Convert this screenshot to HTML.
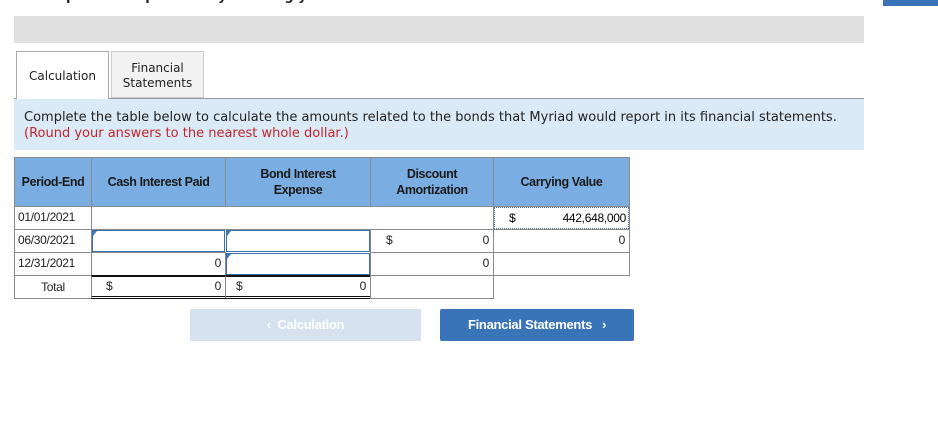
<!DOCTYPE html>
<html><head><style>
body{margin:0;width:938px;height:438px;background:#fff;position:relative;overflow:hidden;font-family:"Liberation Sans",sans-serif;}
.a{position:absolute;box-sizing:border-box;}
.vf{font-family:"DejaVu Sans","Liberation Sans",sans-serif;}
.c{position:absolute;box-sizing:border-box;border:1px solid #8a8a8a;font-size:12px;color:#222;letter-spacing:-0.3px;}
.h{background:#7aaee3;font-weight:bold;text-align:center;display:flex;align-items:center;justify-content:center;line-height:16px;color:#1a1a1a;font-size:12.5px;letter-spacing:-0.4px;}
.r{text-align:right;padding-right:4px;line-height:21px;}
.l{padding-left:3px;line-height:21px;}
.in{border:1px solid #3a6ea5;}
.in:before{content:"";position:absolute;left:0;top:0;border-top:5px solid #3a78c4;border-right:4px solid transparent;}
</style></head><body>
<div class="a" style="left:883px;top:0;width:55px;height:6px;background:#3a74b8;"></div>
<div class="a" style="left:14px;top:16px;width:850px;height:27px;background:#e0e0e0;"></div>
<div class="a vf" style="left:34px;top:0;height:16px;overflow:hidden;font-size:13px;font-weight:bold;color:#222;"><div style="margin-top:-13px;line-height:20px;">Complete this question by entering your answers in the tabs below.</div></div>
<div class="a" style="left:14px;top:98px;width:850px;height:1px;background:#999;"></div>
<div class="a vf" style="left:16px;top:51px;width:93px;height:48px;border:1px solid #aaa;border-bottom:none;background:#fff;font-size:12px;text-align:center;line-height:48px;color:#222;">Calculation</div>
<div class="a vf" style="left:111px;top:51px;width:93px;height:47px;border:1px solid #ccc;background:#f2f2f2;font-size:12px;text-align:center;padding-top:9px;line-height:15px;color:#222;">Financial<br>Statements</div>
<div class="a vf" style="left:14px;top:99px;width:850px;height:51px;background:#dbeaf7;font-size:13px;padding:11px 0 0 10px;line-height:16px;color:#222;white-space:nowrap;">Complete the table below to calculate the amounts related to the bonds that Myriad would report in its financial statements.<br><span style="color:#c0262d;">(Round your answers to the nearest whole dollar.)</span></div>

<div class="c h" style="left:14px;top:157px;width:78px;height:50px;">Period-End</div>
<div class="c h" style="left:91px;top:157px;width:135px;height:50px;">Cash Interest Paid</div>
<div class="c h" style="left:225px;top:157px;width:146px;height:50px;">Bond Interest<br>Expense</div>
<div class="c h" style="left:370px;top:157px;width:124px;height:50px;">Discount<br>Amortization</div>
<div class="c h" style="left:493px;top:157px;width:137px;height:50px;">Carrying Value</div>

<div class="c l" style="left:14px;top:206px;width:78px;height:24px;">01/01/2021</div>
<div class="c" style="left:91px;top:206px;width:403px;height:24px;"></div>
<div class="c" style="left:493px;top:206px;width:137px;height:24px;"></div>
<div class="a" style="left:494px;top:207px;width:135px;height:22px;border:1px dotted #3a6ea5;font-size:12px;letter-spacing:-0.3px;line-height:20px;"><span style="position:absolute;left:14px;">$</span><span style="position:absolute;right:2px;">442,648,000</span></div>

<div class="c l" style="left:14px;top:229px;width:78px;height:24px;">06/30/2021</div>
<div class="c in" style="left:92px;top:230px;width:133px;height:22px;"></div>
<div class="c in" style="left:226px;top:230px;width:144px;height:22px;"></div>
<div class="c r" style="left:370px;top:229px;width:124px;height:24px;"><span style="position:absolute;left:15px;">$</span>0</div>
<div class="c r" style="left:493px;top:229px;width:137px;height:24px;">0</div>

<div class="c l" style="left:14px;top:252px;width:78px;height:24px;">12/31/2021</div>
<div class="c r" style="left:91px;top:252px;width:135px;height:24px;">0</div>
<div class="c in" style="left:226px;top:253px;width:144px;height:22px;"></div>
<div class="c r" style="left:370px;top:252px;width:124px;height:24px;">0</div>
<div class="c" style="left:493px;top:252px;width:137px;height:24px;"></div>

<div class="c" style="left:14px;top:275px;width:78px;height:24px;text-align:center;line-height:22px;">Total</div>
<div class="c r" style="left:91px;top:275px;width:135px;height:24px;border-top:2px solid #111;border-bottom:3px double #111;line-height:19px;"><span style="position:absolute;left:14px;">$</span>0</div>
<div class="c r" style="left:225px;top:275px;width:146px;height:24px;border-top:2px solid #111;border-bottom:3px double #111;line-height:19px;"><span style="position:absolute;left:10px;">$</span>0</div>
<div class="c" style="left:370px;top:275px;width:124px;height:24px;"></div>

<div class="a" style="left:190px;top:309px;width:231px;height:32px;background:#d6e2f0;color:#fff;font-size:13px;font-weight:bold;text-align:center;line-height:32px;letter-spacing:-0.3px;">&lsaquo;&nbsp;&nbsp;Calculation</div>
<div class="a" style="left:440px;top:309px;width:194px;height:32px;background:#3a74b8;color:#fff;font-size:13px;font-weight:bold;text-align:center;line-height:32px;border-radius:2px;letter-spacing:-0.3px;">Financial Statements&nbsp;&nbsp;&nbsp;&rsaquo;</div>
</body></html>
